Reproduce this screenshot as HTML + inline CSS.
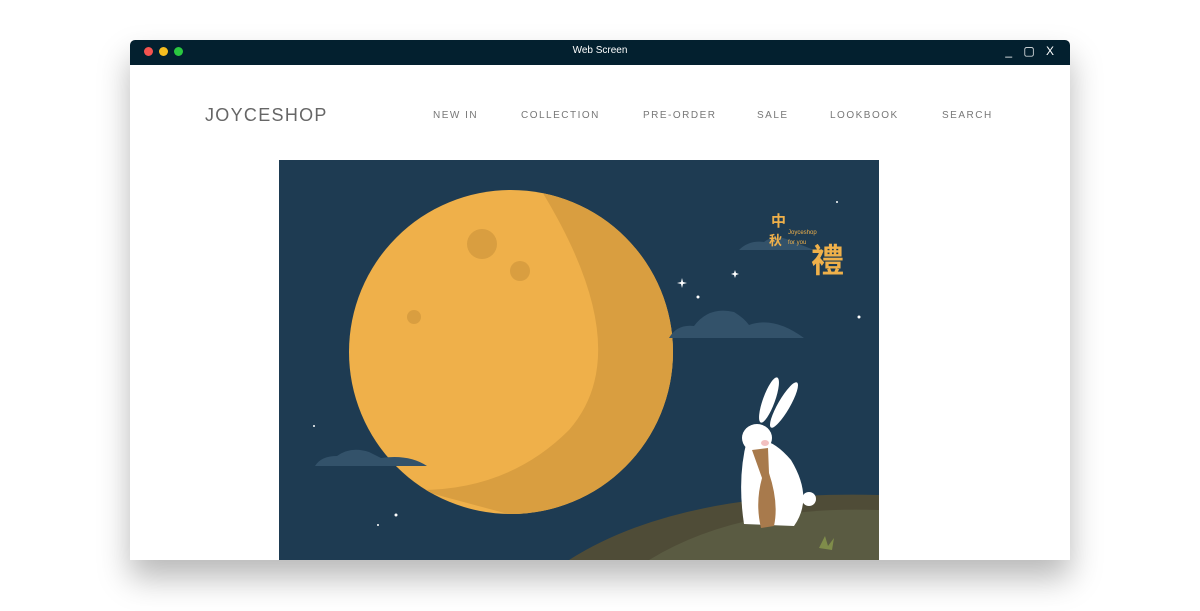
<!DOCTYPE html>
<html><head><meta charset="utf-8"><style>
body{margin:0;width:1200px;height:611px;background:#fff;position:relative;overflow:hidden;font-family:"Liberation Sans",sans-serif}
.win{position:absolute;left:130px;top:40px;width:940px;height:520px;background:#fff;box-shadow:0 18px 30px rgba(0,0,0,.28);}
.bar{height:25px;background:#03202f;border-radius:5px 5px 0 0;position:relative;color:#fff;font-size:10px;text-align:center;line-height:21px}
.d{position:absolute;top:7px;width:9px;height:9px;border-radius:50%}
.ctl{position:absolute;right:12px;top:1px;font-size:12px;letter-spacing:4px}
.logo{position:absolute;left:75px;top:65px;font-size:18px;letter-spacing:1.3px;color:#666}
.nav{position:absolute;top:70px;font-size:10px;letter-spacing:1.5px;color:#777}
svg{position:absolute;left:149px;top:120px}
</style></head><body>
<div class="win">
<div class="bar"><span class="d" style="left:14px;background:#f5534f"></span><span class="d" style="left:29px;background:#f5bd1f"></span><span class="d" style="left:44px;background:#2ac840"></span>Web Screen<span class="ctl">_ ▢ X</span></div>
<div class="logo">JOYCESHOP</div>
<div class="nav" style="left:303px">NEW IN</div>
<div class="nav" style="left:391px">COLLECTION</div>
<div class="nav" style="left:513px">PRE-ORDER</div>
<div class="nav" style="left:627px">SALE</div>
<div class="nav" style="left:700px">LOOKBOOK</div>
<div class="nav" style="left:812px">SEARCH</div>
<svg width="600" height="400" viewBox="0 0 600 400">
<rect width="600" height="400" fill="#1e3b52"/>
<defs><clipPath id="m"><circle cx="232" cy="192" r="162"/></clipPath></defs>
<circle cx="232" cy="192" r="162" fill="#efb04a"/>
<path d="M262 30 Q360 190 290 270 Q230 330 140 330 L400 400 L400 0Z" fill="#d99e40" clip-path="url(#m)"/>
<circle cx="203" cy="84" r="15" fill="#d99e40"/><circle cx="241" cy="111" r="10" fill="#d99e40"/><circle cx="135" cy="157" r="7" fill="#d99e40"/>
<path d="M390 178 Q398 164 415 166 Q430 146 455 152 Q465 158 470 165 Q495 156 525 178Z" fill="#33526a"/>
<path d="M36 306 Q42 296 58 296 Q72 286 90 292 Q98 296 102 298 Q130 294 148 306Z" fill="#33526a"/>
<path d="M460 90 Q470 80 485 82 Q495 74 510 80 L535 90Z" fill="#33526a"/>
<path d="M290 400 Q400 330 600 335 L600 400Z" fill="#4f4c37"/>
<path d="M370 400 Q460 345 600 350 L600 400Z" fill="#5a5b42"/>
<g fill="#fff"><path d="M403 118l1 4 4 1-4 1-1 4-1-4-4-1 4-1z"/><path d="M456 110l1 3 3 1-3 1-1 3-1-3-3-1 3-1z"/><circle cx="419" cy="137" r="1.5"/><circle cx="580" cy="157" r="1.5"/><circle cx="558" cy="42" r="1"/><circle cx="35" cy="266" r="1"/><circle cx="117" cy="355" r="1.5"/><circle cx="99" cy="365" r="1"/></g>
<text x="492" y="66" fill="#efb04a" font-size="15" font-weight="bold" font-family="Noto Sans CJK TC,sans-serif">中</text>
<text x="490" y="85" fill="#efb04a" font-size="13" font-weight="bold" font-family="Noto Sans CJK TC,sans-serif">秋</text>
<text x="532" y="112" fill="#efb04a" font-size="33" font-weight="bold" font-family="Noto Sans CJK TC,sans-serif">禮</text>
<text x="509" y="74" fill="#efb04a" font-size="6">Joyceshop</text>
<text x="509" y="84" fill="#efb04a" font-size="6">for you</text>
<g transform="translate(0,-32)">
<g fill="#fff"><ellipse cx="490" cy="272" rx="6" ry="24" transform="rotate(20 490 272)"/><ellipse cx="505" cy="277" rx="6" ry="26" transform="rotate(30 505 277)"/>
<ellipse cx="478" cy="310" rx="15" ry="14"/><path d="M468 312 Q458 350 465 396 L515 398 Q535 370 512 332 Q495 312 480 312Z"/><circle cx="530" cy="371" r="7"/></g>
<ellipse cx="486" cy="315" rx="4" ry="3" fill="#f3c0c0"/>
<path d="M473 322 L489 320 L490 345 Q500 375 495 398 L482 400 Q476 375 483 350Z" fill="#a87a4c"/>
</g>
<path d="M540 388 l6-12 3 10 6-8 -2 12z M437 425 l3-10 3 8 4-6 -2 10z" fill="#7f8c4a"/>
<path d="M435 422 l3-10 3 8 4-6 -2 10z" fill="#7f8c4a"/>
</svg>
</div>
</body></html>
